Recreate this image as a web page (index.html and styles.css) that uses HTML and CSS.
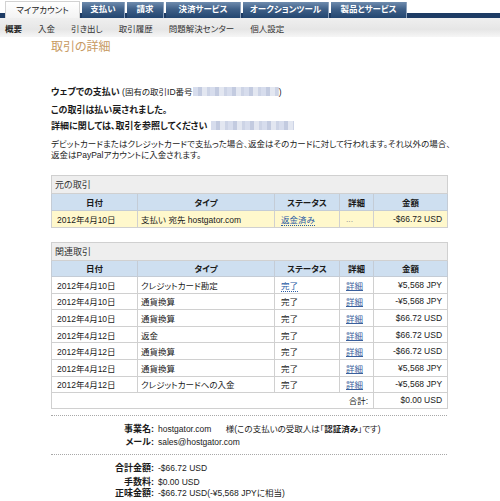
FILE: index.html
```html
<!DOCTYPE html>
<html lang="ja">
<head>
<meta charset="utf-8">
<title>取引の詳細</title>
<link rel="stylesheet" href="styles.css">
</head>
<body>
<div class="tabs">
  <div class="tab active w1">マイアカウント</div>
  <div class="tab w2">支払い</div>
  <div class="tab w3">請求</div>
  <div class="tab w4">決済サービス</div>
  <div class="tab w5">オークションツール</div>
  <div class="tab w6">製品とサービス</div>
</div>
<div class="subnav">
  <span class="sn current">概要</span>
  <span class="sn">入金</span>
  <span class="sn">引き出し</span>
  <span class="sn">取引履歴</span>
  <span class="sn">問題解決センター</span>
  <span class="sn">個人設定</span>
</div>
<div class="content">
  <h1 class="title">取引の詳細</h1>
  <p class="pay"><b>ウェブでの支払い</b> (固有の取引ID番号<span class="blur b1"></span>)</p>
  <p class="refund">この取引は払い戻されました。<br>詳細に関しては、取引を参照してください <span class="blur b2"></span></p>
  <p class="note">デビットカードまたはクレジットカードで支払った場合、返金はそのカードに対して行われます。それ以外の場合、<br>返金はPayPalアカウントに入金されます。</p>

  <table class="tx t1">
    <colgroup><col class="c1"><col class="c2"><col class="c3"><col class="c4"><col class="c5"></colgroup>
    <tr class="cap"><td colspan="5">元の取引</td></tr>
    <tr class="head"><th>日付</th><th>タイプ</th><th>ステータス</th><th>詳細</th><th>金額</th></tr>
    <tr class="hl"><td>2012年4月10日</td><td>支払い 宛先 hostgator.com</td><td><a class="dot">返金済み</a></td><td class="muted">...</td><td class="amt">-$66.72 USD</td></tr>
  </table>

  <table class="tx t2">
    <colgroup><col class="c1"><col class="c2"><col class="c3"><col class="c4"><col class="c5"></colgroup>
    <tr class="cap"><td colspan="5">関連取引</td></tr>
    <tr class="head"><th>日付</th><th>タイプ</th><th>ステータス</th><th>詳細</th><th>金額</th></tr>
    <tr><td>2012年4月10日</td><td>クレジットカード勘定</td><td><a class="dot">完了</a></td><td><a class="lnk">詳細</a></td><td class="amt">¥5,568 JPY</td></tr>
    <tr><td>2012年4月10日</td><td>通貨換算</td><td>完了</td><td><a class="lnk">詳細</a></td><td class="amt">-¥5,568 JPY</td></tr>
    <tr><td>2012年4月10日</td><td>通貨換算</td><td>完了</td><td><a class="lnk">詳細</a></td><td class="amt">$66.72 USD</td></tr>
    <tr><td>2012年4月12日</td><td>返金</td><td>完了</td><td><a class="lnk">詳細</a></td><td class="amt">$66.72 USD</td></tr>
    <tr><td>2012年4月12日</td><td>通貨換算</td><td>完了</td><td><a class="lnk">詳細</a></td><td class="amt">-$66.72 USD</td></tr>
    <tr><td>2012年4月12日</td><td>通貨換算</td><td>完了</td><td><a class="lnk">詳細</a></td><td class="amt">¥5,568 JPY</td></tr>
    <tr><td>2012年4月12日</td><td>クレジットカードへの入金</td><td>完了</td><td><a class="lnk">詳細</a></td><td class="amt">-¥5,568 JPY</td></tr>
    <tr class="total"><td colspan="4" class="amt">合計:</td><td class="amt">$0.00 USD</td></tr>
  </table>

  <div class="sep s1"></div>
  <div class="kv info">
    <div class="k">事業名:</div><div class="v">hostgator.com <span class="sama">様(この支払いの受取人は「<b>認証済み</b>」です)</span></div>
    <div class="k">メール:</div><div class="v">sales@hostgator.com</div>
  </div>
  <div class="sep s2"></div>
  <div class="kv sums">
    <div class="k">合計金額:</div><div class="v">-$66.72 USD</div>
    <div class="k">手数料:</div><div class="v">$0.00 USD</div>
    <div class="k last">正味金額:</div><div class="v last">-$66.72 USD(-¥5,568 JPYに相当)</div>
  </div>
</div>
</body>
</html>
```

FILE: styles.css
```css
html, body {
  margin: 0;
  padding: 0;
  background: #ffffff;
}
body {
  font-family: "Liberation Sans", "Noto Sans CJK JP", sans-serif;
  font-size: 8.5px;
  color: #1a1a1a;
  font-feature-settings: "palt";
  width: 500px;
  overflow: hidden;
}

/* top tabs */
.tabs {
  display: flex;
  gap: 2px;
  padding-left: 5px;
  height: 18px;
  background: linear-gradient(to bottom, transparent 0, transparent 13px, #1d3b64 13px, #1d3b64 18px);
}
.tab {
  margin-top: 2px;
  height: 16px;
  line-height: 15px;
  text-align: center;
  font-weight: bold;
  color: #ffffff;
  background: linear-gradient(to bottom, #6f8cae 0%, #3f6088 45%, #234670 100%);
  border-right: 1px solid #8ea3bd;
  box-sizing: border-box;
  white-space: nowrap;
  font-size: 8.5px;
}
.tab.active {
  margin-top: 1px;
  height: 17px;
  font-weight: normal;
  color: #222;
  background: linear-gradient(to bottom, #ffffff 0%, #f3f3f3 100%);
  border: 1px solid #d2d2d2;
  border-bottom: none;
  line-height: 16px;
}
.w1 { width: 75px; }
.w2 { width: 43px; }
.w3 { width: 37px; }
.w4 { width: 75px; }
.w5 { width: 86px; }
.w6 { width: 76px; }

/* sub navigation */
.subnav {
  height: 19px;
  display: flex;
  align-items: center;
  gap: 16px;
  padding-left: 5px;
  background: linear-gradient(to bottom, #efefef 0%, #e6e6e6 60%, #f6f6f6 100%);
  color: #333;
  white-space: nowrap;
}
.sn.current { font-weight: bold; color: #222; }

/* content */
.content {
  padding-left: 51px;
  width: 396px;
}
.title {
  margin: 3px 0 0 0;
  font-size: 12px;
  line-height: 14px;
  font-weight: normal;
  color: #c79a62;
}
.pay {
  margin: 33px 0 0 0;
  line-height: 11px;
  font-size: 8.5px;
  white-space: nowrap;
}
.pay b { font-size: 9px; }
.blur {
  display: inline-block;
  height: 9px;
  vertical-align: -1px;
  background:
    repeating-linear-gradient(90deg, #d7dded 0 5px, #c3cbe0 5px 9px, #e3e7f1 9px 14px, #cdd4e6 14px 17px);
}
.b1 { width: 86px; }
.b2 { width: 83px; margin-left: 1px; }
.refund {
  margin: 4px 0 0 0;
  line-height: 16px;
  font-weight: bold;
  font-size: 9px;
  white-space: nowrap;
}
.note {
  margin: 5px 0 0 0;
  line-height: 11px;
  font-size: 8.5px;
  white-space: nowrap;
  color: #222;
}

/* tables */
.tx {
  width: 396px;
  table-layout: fixed;
  border-collapse: collapse;
  border: 1px solid #c4c4c4;
}
.t1 { margin-top: 14px; }
.t2 { margin-top: 14px; }
.c1 { width: 86px; }
.c2 { width: 137px; }
.c3 { width: 65px; }
.c4 { width: 34px; }
.c5 { width: 74px; }
.tx td, .tx th {
  border: 1px solid #d0d0d0;
  padding: 0 3px;
  height: 15.6px;
  white-space: nowrap;
  overflow: hidden;
}
.tx td:first-child { padding-left: 5px; }
.tx td:nth-child(3), .tx td:nth-child(4) { padding-left: 6px; }
.tx .cap td {
  height: 17px;
  background: #eeeeee;
  padding-left: 3px;
  font-size: 9px;
  color: #333;
  border-bottom: 1px solid #d0d0d0;
}
.tx .head th {
  height: 15.5px;
  background: #cedff0;
  font-weight: bold;
  text-align: center;
  border-color: #c4ccd6;
}
.tx .hl td { background: #fff8cc; height: 16px; }
.tx td.amt { text-align: right; padding-right: 5px; }
.tx .total td { height: 14.5px; }
.muted { color: #999; }
a.dot {
  color: #2b5ca5;
  text-decoration: none;
  border-bottom: 1px dotted #2b5ca5;
}
a.lnk {
  color: #3a5f9c;
  text-decoration: underline;
}

/* separators and key-values */
.sep {
  width: 396px;
  border-top: 1px dotted #a8a8a8;
}
.s1 { margin-top: 6px; }
.s2 { margin-top: 5px; }
.kv {
  display: grid;
  grid-template-columns: 103px auto;
  column-gap: 4px;
  white-space: nowrap;
}
.info { margin-top: 7px; line-height: 13.3px; }
.sums { margin-top: 7px; line-height: 13.3px; }
.k {
  text-align: right;
  font-weight: bold;
  font-size: 9px;
}
.sama { margin-left: 12px; }
.last { line-height: 9px; }
```
